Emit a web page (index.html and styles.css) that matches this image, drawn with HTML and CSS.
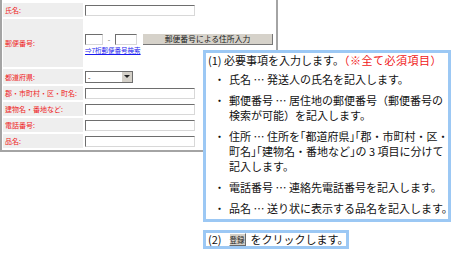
FILE: index.html
```html
<!DOCTYPE html>
<html lang="ja">
<head>
  <meta charset="UTF-8" />
  <title>発送人情報の入力</title>
  <link rel="stylesheet" href="styles.css">
</head>
<body>
  <div class="page">
    <div class="shot">
      <div class="form">
        <div class="label row-s">氏名:</div>
        <div class="value row-s"><input class="field" type="text"></div>

        <div class="label row-zip">郵便番号:</div>
        <div class="value row-zip zip">
          <div class="zip-line">
            <input class="field zip1" type="text">
            <span class="dash">-</span>
            <input class="field zip2" type="text">
            <button class="zip-btn">郵便番号による住所入力</button>
          </div>
          <a class="zip-link" href="#">⇒7桁郵便番号検索</a>
        </div>

        <div class="label row-m">都道府県:</div>
        <div class="value row-m">
          <span class="select"><span class="select-text">-</span><span class="arrow"></span></span>
        </div>

        <div class="label row-s">郡・市町村・区・町名:</div>
        <div class="value row-s"><input class="field" type="text"></div>

        <div class="label row-s">建物名・番地など:</div>
        <div class="value row-s"><input class="field" type="text"></div>

        <div class="label row-s">電話番号:</div>
        <div class="value row-s"><input class="field" type="text"></div>

        <div class="label row-s">品名:</div>
        <div class="value row-s"><input class="field" type="text"></div>
      </div>
    </div>

    <div class="notes">
      <div class="note">
        <div class="note-title">(1) 必要事項を入力します。<span class="req">（※全て必須項目）</span></div>
        <ul class="items">
          <li><span class="dot">・</span><span>氏名 … 発送人の氏名を記入します。</span></li>
          <li><span class="dot">・</span><span>郵便番号 … 居住地の郵便番号（郵便番号の<br>検索が可能）を記入します。</span></li>
          <li><span class="dot">・</span><span>住所 … 住所を<span class="half">「</span>都道府県<span class="half">」「</span>郡・市町村・区・<br>町名<span class="half">」「</span>建物名・番地など<span class="half">」</span>の 3 項目に分けて<br>記入します。</span></li>
          <li><span class="dot">・</span><span>電話番号 … 連絡先電話番号を記入します。</span></li>
          <li><span class="dot">・</span><span>品名 … 送り状に表示する品名を記入します。</span></li>
        </ul>
      </div>
      <div class="note note-small">
        <span>(2)</span>
        <span class="reg-btn">登録</span>
        <span>をクリックします。</span>
      </div>
    </div>
  </div>
</body>
</html>
```

FILE: styles.css
```css
body {
  margin: 0;
  background-color: #fff;
  font-family: "Noto Sans CJK JP", "Noto Sans", sans-serif;
  color: #111;
}

.page {
  position: relative;
  width: 453px;
  height: 257px;
}

/* scaled-down form screenshot */
.shot {
  border: 2px solid #a4a4a4;
  border-top: none;
  padding: 3px 0 2px 1px;
  width: 273px;
}

.form {
  display: grid;
  grid-template-columns: 80px 1fr;
  column-gap: 2px;
  row-gap: 2px;
}

.row-s {
  height: 14px;
}

.row-m {
  height: 15px;
}

.row-zip {
  height: 48px;
}

.label {
  background-color: #eeeeee;
  color: #ee1c1c;
  font-size: 7px;
  padding-left: 2px;
  display: flex;
  align-items: center;
  white-space: nowrap;
}

.value {
  display: flex;
  align-items: center;
}

.field {
  appearance: none;
  box-sizing: border-box;
  width: 110px;
  height: 11px;
  margin: 0;
  padding: 0;
  background: #fff;
  border: 1px solid #d8d8d8;
  border-top-color: #6e6e6e;
  border-left-color: #6e6e6e;
}

.zip {
  flex-direction: column;
  align-items: flex-start;
  justify-content: center;
  gap: 2px;
}

.zip-line {
  display: flex;
  align-items: center;
  padding-top: 1px;
}

.zip1 {
  width: 18px;
}

.zip2 {
  width: 22px;
}

.dash {
  font-size: 7px;
  color: #555;
  width: 12px;
  text-align: center;
}

.zip-btn {
  margin-left: 6px;
  width: 130px;
  height: 11px;
  padding: 0;
  border: none;
  border-right: 1px solid #777;
  border-bottom: 1px solid #777;
  background-color: #d6d2ca;
  font-family: "Noto Sans CJK JP", sans-serif;
  font-size: 7.8px;
  line-height: 10px;
  color: #222;
}

.zip-link {
  font-size: 6.5px;
  line-height: 7px;
  color: #1a1aee;
  text-decoration: underline;
}

.select {
  box-sizing: border-box;
  width: 48px;
  height: 12px;
  border: 1px solid #6e6e6e;
  display: flex;
  align-items: stretch;
  justify-content: space-between;
}

.select-text {
  font-size: 7px;
  line-height: 10px;
  padding-left: 2px;
}

.arrow {
  width: 10px;
  background-color: #d4d0c8;
  display: flex;
  align-items: center;
  justify-content: center;
}

.arrow::before {
  content: "";
  border-left: 3px solid transparent;
  border-right: 3px solid transparent;
  border-top: 3px solid #222;
}

/* explanation boxes */
.notes {
  position: absolute;
  left: 203px;
  top: 50px;
  display: flex;
  flex-direction: column;
  align-items: flex-start;
  gap: 8px;
  font-size: 11px;
  line-height: 15px;
}

.note {
  background-color: #fff;
  border: 3px solid #9cc8f4;
  white-space: nowrap;
}

.note:first-child {
  width: 242px;
  height: 166px;
}

.note-title {
  padding-left: 2px;
}

.req {
  color: #f01818;
  letter-spacing: 0.5px;
}

.half {
  font-feature-settings: "halt";
}

.items {
  list-style: none;
  margin: 4px 0 0;
  padding: 0 0 0 8px;
  display: flex;
  flex-direction: column;
  gap: 6px;
}

.items li {
  display: flex;
}

.dot {
  width: 15px;
  flex: none;
}

.note-small {
  width: 138px;
  height: 13px;
  display: flex;
  align-items: center;
  gap: 5px;
  padding-left: 2px;
}

.reg-btn {
  width: 27px;
  height: 13px;
  margin-left: 2px;
  box-sizing: border-box;
  background-color: #d4d0c8;
  border: 1px solid #fff;
  border-right-color: #6a6a6a;
  border-bottom-color: #6a6a6a;
  font-size: 7.5px;
  line-height: 11px;
  text-align: center;
  color: #222;
}
```
